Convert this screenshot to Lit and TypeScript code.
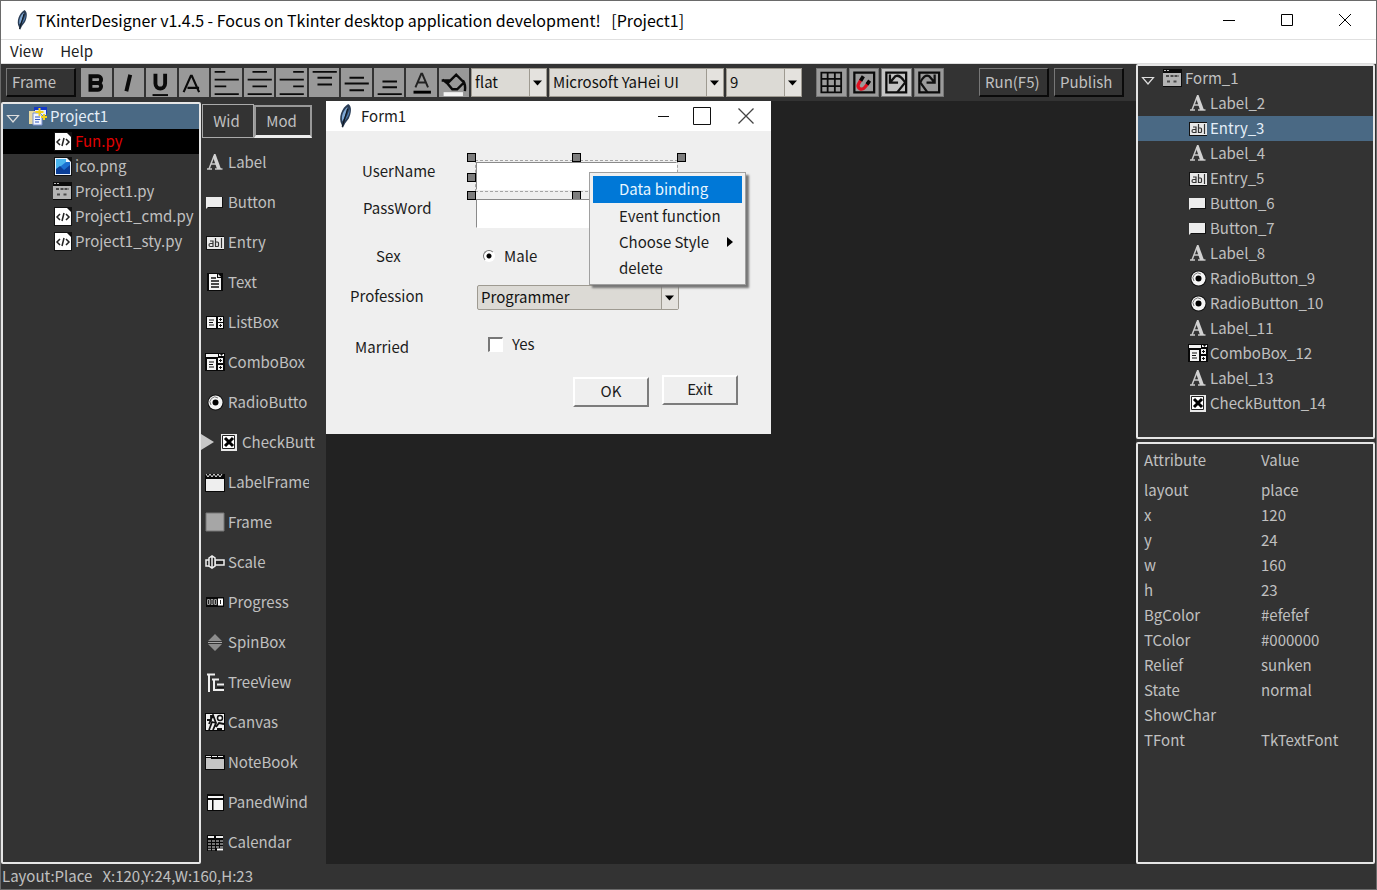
import { LitElement, html, svg, css, nothing } from "lit";
import { customElement, state } from "lit/decorators.js";
import { classMap } from "lit/directives/class-map.js";
import { styleMap } from "lit/directives/style-map.js";

const glyphs: Record<string, unknown> = {
  feather: svg`<path d="M13.500 0C17 2 16 8 14 12l-3 4-2 4-1-3C5 12 8 3 13.500 0z" fill="#2a3d56"/><path d="M13 2.500C9.500 5 7.500 10 8.500 14.500c2-3 3.500-7 4.500-12z" fill="#7fa8d4"/><path d="M14.500 4c.500 4-1 7-4 10 1.500-3 3-6 4-10z" fill="#4f7db0"/><path d="M13 4 8.500 19" stroke="#101820" stroke-width="1"/>`,
  project: svg`<path d="M6 1h13v7H6z" fill="#1438c8"/><path d="M7 4h11v5H7z" fill="#e8eefc"/><path d="M1 5h7v13H1z" fill="#e8d9a0"/><path d="M5 7h7l2 2v10H5z" fill="#f2f6ff" stroke="#7890d0"/><path d="M7 11h5M7 13.500h5M7 16h4" stroke="#3558c0"/><path d="M11.500 2v8M7.500 6h8M16 8v6M13 11h6" stroke="#f3d21c" stroke-width="2"/>`,
  code: svg`<path d="M1 1h18v19H1z" fill="#111"/><path d="M2 2h12l4 4v13H2z" fill="#fff"/><path d="m7 8-3 3 3 3M13 8l3 3-3 3M11 7l-2 8" fill="none" stroke="#222" stroke-width="1.500"/>`,
  image: svg`<path d="M1 1h18v19H1z" fill="#111"/><path d="M2 2h12l4 4v13H2z" fill="#eaf4ff"/><path d="M3 3h10v3h4v12H3z" fill="#1b6fd0"/><path d="M3 3h10v3L3 14z" fill="#48b4ee"/><path d="m3 13 4-3 4 4 6-5v9H3z" fill="#0a3e98"/>`,
  form: svg`<path d="M0 1h19v18H0z" fill="#0b0b0b"/><path d="M1 2h2v1H1zM4 2h2v1H4z" fill="#bbb"/><path d="M0 5h18v13H0z" fill="#b4b4b4"/><path d="M3 8h3M7.500 8H16M4 13.500h4M10.500 13.500h4" stroke="#4a4a4a" stroke-width="2" stroke-dasharray="3 1"/>`,
  label: svg`<path d="M2 17h5M10 17h7.500" stroke="#c8c8c8" stroke-width="1.500"/><path d="m4 17 5-13M6 12h7" stroke="#c8c8c8" stroke-width="1.500" fill="none"/><path d="m8 5 1-3h1.500l5.500 15h-4z" fill="#d2d2d2"/>`,
  button: svg`<path d="M1 5h17v11H1z" fill="#111"/><path d="M1 5h16v10H3l-2 2z" fill="#ececec"/>`,
  entry: svg`<path d="M1 4h18v14H1z" fill="#111"/><path d="M2 5h17v12H2z" fill="#e8e8e8"/><path d="M5 9h3v5.500H5.500a1 1 0 0 1 0-3H8M10.500 6v8.500h2a1 1 0 0 0 1-1V11a1 1 0 0 0-1-1h-2M16.500 6v10" fill="none" stroke="#333" stroke-width="1.200"/>`,
  text: svg`<path d="M2 1h16v18H2z" fill="#090909"/><path d="M4 2h8v4h4v12H4z" fill="#f4f4f4"/><path d="m13 2 3 3h-3z" fill="#ddd"/><path d="M6 6h5M6 9h8M6 12h8M6 15h8" stroke="#111" stroke-width="1.500"/>`,
  listbox: svg`<path d="M1 4h18v13H1z" fill="#080808"/><path d="M2 5h9v11H2zM13 5h5v5h-5zM13 11h5v5h-5z" fill="#f4f4f4"/><path d="M4 8h5M4 10.500h4M4 13h5M14 7.500h3M14 13.500h3M15.500 6v3M15.500 12v3" stroke="#111"/>`,
  combobox: svg`<path d="M0 1h20v18H0z" fill="#080808"/><path d="M1 2h12v3H1zM14 2h5v2h-5zM2 7h9v11H2zM13 6h5v5h-5zM13 13h5v5h-5z" fill="#f4f4f4"/><path d="M4 10h5M4 12.500h4M4 15h5M14 8.500h3M14 15.500h3M15.500 7v3M15.500 14v3" stroke="#111"/><path d="M15 2h3l-1.500 2z" fill="#111"/>`,
  radio: svg`<circle cx="10.500" cy="10.500" r="8" fill="#111"/><circle cx="10.500" cy="10.500" r="7" fill="#f4f4f4"/><path d="M6 13a5 5 0 0 1 7-7" fill="none" stroke="#777"/><circle cx="10.500" cy="10.500" r="3" fill="#000"/>`,
  check: svg`<path d="M2 2h16v17H2z" fill="#e9e9e9"/><path d="M3.500 3.500h12v13h-12z" fill="#fff" stroke="#222"/><path d="m6 6 8 8M14 6l-8 8" stroke="#000" stroke-width="3"/>`,
  labelframe: svg`<path d="M0 2h20v18H0z" fill="#080808"/><path d="M1 7h18v12H1z" fill="#eee"/><path d="m1 2 2 3 2-3 2 3 2-3 2 3 2-3 2 3 2-3" stroke="#ddd" fill="none"/>`,
  frame: svg`<path d="M1 1h18v18H1z" fill="#a6a6a6" stroke="#777"/>`,
  scale: svg`<path d="M1 8h4v6H1zM10 8h9v5h-9z" fill="#222" stroke="#eee" stroke-width="1.500"/><path d="M4 6l3-2 3 2v8l-3 2-3-2zM7 5v11" fill="#222" stroke="#eee" stroke-width="1.500"/>`,
  progress: svg`<path d="M1 5h18v10H1z" fill="#080808"/><path d="M2.500 7.500h2v5h-2zM6 7.500h2v5H6zM9.500 7.500h2v5h-2z" fill="#222" stroke="#999"/><path d="M13 6.500h5v7h-5z" fill="#fff"/><path d="M15.500 8v4" stroke="#222"/>`,
  spin: svg`<path d="m10 2 7 7H3zM3 12h14l-7 7z" fill="#8c8c8c"/><path d="M3 10.500h14" stroke="#aaa"/>`,
  tree: svg`<path d="M2 2.500h8M4 2v18M7 7.500h7M9 7v12M12 12.500h7M8 18h11" stroke="#eee" stroke-width="2"/><path d="M12 15.500h7" stroke="#111"/>`,
  canvas: svg`<path d="M0 1h20v18H0z" fill="#080808"/><path d="M1 2h18v16H1z" fill="#efefef"/><path d="M2 8h4V3M4 12l4-9 3 8M4 18l3-8 4 1-3 7M11 15l3-4 5 1M12 17h5" stroke="#111" stroke-width="1.800" fill="none"/><circle cx="15" cy="6" r="2.500" fill="#fff" stroke="#111" stroke-width="1.500"/>`,
  notebook: svg`<path d="M0 3h20v15H0z" fill="#080808"/><path d="M1 4h5v1H1zM7 4h5v1H7zM13 4h5v1h-5z" fill="#eee"/><path d="M1 6h5v1h13v10H1z" fill="#c4c4c4"/>`,
  paned: svg`<path d="M2 2h17v17H2z" fill="#080808"/><path d="M3 4h15v2H3zM3 8h4v10H3zM8.500 8H18v10H8.500z" fill="#f6f6f6"/>`,
  calendar: svg`<path d="M2 3h16v16H2z" fill="#080808"/><path d="M3 5h6M11 5h7" stroke="#eee" stroke-width="2"/><path d="M3 9h15M3 12h15M3 15h15M3 17.500h8" stroke="#999" stroke-width="1.500" stroke-dasharray="3 1"/><path d="M12 17.500h6" stroke="#fff" stroke-width="2"/>`,
};

const icon = (name: string) =>
  html`<svg class="icon" viewBox="0 0 20 20" aria-hidden="true">${glyphs[name]}</svg>`;

/* Toolbar faces are drawn on a 30 x 30 grid. */
const bars = (d: string) => svg`<path d=${d} stroke="#0a0a0a" stroke-width="2"/>`;
const formatTools: [string, unknown][] = [
  ["Bold", svg`<path d="M9 8.500v14h7a3.500 3.500 0 0 0 1-7 3.500 3.500 0 0 0-1-7zM9 15.500h8" fill="none" stroke="#0a0a0a" stroke-width="4"/>`],
  ["Italic", svg`<path d="m16 7-4 17" stroke="#0a0a0a" stroke-width="4"/>`],
  ["Underline", svg`<path d="M9 6v10c0 7 10 7 10 0V6" fill="none" stroke="#0a0a0a" stroke-width="4"/><path d="M6 28h16" stroke="#0a0a0a" stroke-width="2"/>`],
  ["Strikethrough", svg`<path d="m4 25 7.500-17h1L20 25M8 20.500h12" fill="none" stroke="#0a0a0a" stroke-width="2.200"/>`],
  ["Align left", bars("M3 4h11M3 12h25M3 19h12M3 27h25")],
  ["Align center", bars("M8 4h15M3 12h25M8 19h15M3 27h25")],
  ["Align right", bars("M17 4h11M3 12h25M17 19h11M3 27h25")],
  ["Align top", bars("M3 4h25M8 10h15M8 17h15")],
  ["Align middle", bars("M8 10h15M3 16h25M8 23h15")],
  ["Align bottom", bars("M8 14h15M8 20h15M3 27h25")],
  ["Text color", svg`<path d="m9 20 6-14h1l6 14M11 15h9" fill="none" stroke="#222" stroke-width="2"/><path d="M7 25h18" stroke="#000" stroke-width="3"/>`],
  ["Fill color", svg`<path d="M2 13h9M8 16l9-9 8 8-7 7h-5zM3 12l6 5M24 13q3 4 2 11" fill="none" stroke="#0a0a0a" stroke-width="2.500"/><path d="M4 25h20v4H4z" fill="#f4f4f4"/>`],
];

const gridTools: [string, unknown][] = [
  ["Grid", svg`<path d="M4 4h22v22H4zM11 4v22M19 4v22M4 11h22M4 19h22" fill="none" stroke="#0a0a0a" stroke-width="2"/>`],
  ["Snap", svg`<path d="M4 4h22v22H4z" fill="none" stroke="#0a0a0a" stroke-width="2.500"/><path d="M12 11 9 16c-3 5 3 9 7 4l4-5" fill="none" stroke="#e01020" stroke-width="3.500"/><path d="m14 8-3 5M21 13l-3 4" stroke="#080808" stroke-width="4"/>`],
  ["Undo", svg`<path d="M4 4h22v22H4z" fill="none" stroke="#0a0a0a" stroke-width="2.500"/><path d="M8 6v9h9M8 15l6-7c4-2 7 1 11 7L16 26" fill="none" stroke="#111" stroke-width="2.500"/>`],
  ["Redo", svg`<path d="M4 4h22v22H4z" fill="none" stroke="#0a0a0a" stroke-width="2.500"/><path d="M21 6v9h-9M21 15l-6-7c-4-2-7 1-10 7l8 11" fill="none" stroke="#111" stroke-width="2.500"/>`],
];

const files = [
  ["code", "Fun.py"], ["image", "ico.png"], ["form", "Project1.py"],
  ["code", "Project1_cmd.py"], ["code", "Project1_sty.py"],
];

const widgets = [
  ["label", "Label"], ["button", "Button"], ["entry", "Entry"], ["text", "Text"],
  ["listbox", "ListBox"], ["combobox", "ComboBox"], ["radio", "RadioButto"],
  ["check", "CheckButt"], ["labelframe", "LabelFrame"], ["frame", "Frame"],
  ["scale", "Scale"], ["progress", "Progress"], ["spin", "SpinBox"],
  ["tree", "TreeView"], ["canvas", "Canvas"], ["notebook", "NoteBook"],
  ["paned", "PanedWind"], ["calendar", "Calendar"],
];

const elements = [
  ["label", "Label_2"], ["entry", "Entry_3"], ["label", "Label_4"], ["entry", "Entry_5"],
  ["button", "Button_6"], ["button", "Button_7"], ["label", "Label_8"],
  ["radio", "RadioButton_9"], ["radio", "RadioButton_10"], ["label", "Label_11"],
  ["combobox", "ComboBox_12"], ["label", "Label_13"], ["check", "CheckButton_14"],
];

const attributes = [
  ["layout", "place"], ["x", "120"], ["y", "24"], ["w", "160"], ["h", "23"],
  ["BgColor", "#efefef"], ["TColor", "#000000"], ["Relief", "sunken"],
  ["State", "normal"], ["ShowChar", ""], ["TFont", "TkTextFont"],
];

const place = (x: number, y: number, w?: number, h?: number) =>
  styleMap({
    left: `${x}px`,
    top: `${y}px`,
    ...(w ? { width: `${w}px` } : {}),
    ...(h ? { height: `${h}px` } : {}),
  });

const shared = css`
  * { box-sizing: border-box; }
  button, select, input { font: inherit; color: inherit; margin: 0; }
  button { border: 0; padding: 0; background: none; text-align: left; }
  ul { list-style: none; margin: 0; padding: 0; }
  .icon { width: 20px; height: 20px; flex: none; display: block; }
  .combo { display: grid; grid-template-columns: 1fr 17px; border: 1px solid #9e9a91; background: #dcdad5; color: #111; }
  .combo select { grid-area: 1 / 1 / 2 / 3; appearance: none; border: 0; border-radius: 0; background: none; padding: 0 18px 2px 3px; width: 100%; min-width: 0; }
  .combo svg { grid-area: 1 / 2; width: 17px; height: 100%; border-left: 1px solid #9e9a91; background: #e4e2de; pointer-events: none; }
`;

const comboArrow = html`<svg viewBox="0 0 16 16" aria-hidden="true"><path d="M3 6h9l-4.500 5z" fill="#000"/></svg>`;

@customElement("form-designer")
class FormDesigner extends LitElement {
  static styles = [
    shared,
    css`
      :host { display: block; position: relative; width: 445px; background: #efefef; color: #1c1c1c; }
      .title { display: flex; align-items: center; height: 30px; background: #fff; padding-left: 6px; }
      .title .name { flex: 1; padding-left: 5px; }
      .title .icon { width: 24px; height: 24px; }
      .title button svg { display: block; margin: auto; }
      .min, .max { width: 38px; }
      .close { width: 50px; }
      .body { position: relative; height: 303px; }
      .placed { position: absolute; line-height: 20px; white-space: nowrap; }
      .field { background: #fff; border: 1px solid; border-color: #8a8a8a #fff #fff #8a8a8a; border-radius: 0; padding: 0 3px; }
      .outline { border: 1px dashed #a4a4a4; }
      .handle { width: 9px; height: 9px; background: #7d7d7d; border: 1px solid #000; }
      .option { display: flex; align-items: center; gap: 9px; }
      .option input { appearance: none; border: 1px solid; background: #fff; }
      .option .dot { width: 12px; height: 12px; border-radius: 50%; border-color: #777 #fff #fff #777; background: radial-gradient(circle, #000 2px, #fff 3px); }
      .option .tick { width: 15px; height: 15px; border-width: 2px 1px 1px 2px; border-color: #777 #fff #fff #777; }
      .push { background: #efefef; border: 2px solid; border-color: #fff #7c7c7c #7c7c7c #fff; padding-bottom: 2px; text-align: center; }
      .combo { border-radius: 2px; }
      .menu { position: absolute; left: 263px; top: 71px; width: 157px; padding: 3px; background: #f0f0f0; border: 1px solid #a0a0a0; box-shadow: 3px 3px 2px #777; }
      .menu button { display: flex; align-items: center; justify-content: space-between; width: 100%; height: 27px; padding: 0 9px 1px 26px; }
      .menu li:nth-child(n + 2) button { height: 26px; }
      .menu .active { background: #0078d7; color: #e8f6ff; }
      .menu svg { width: 6px; height: 10px; }
    `,
  ];

  @state() active = "Data binding";

  render() {
    const menu = ["Data binding", "Event function", "Choose Style", "delete"];
    return html`
      <header class="title">
        ${icon("feather")}<span class="name">Form1</span>
        <button class="min" aria-label="Minimize form"><svg width="12" height="12"><path d="M0 6.500h11" stroke="#111"/></svg></button>
        <button class="max" aria-label="Maximize form"><svg width="20" height="20"><path d="M1.500 1.500h17v17h-17z" fill="none" stroke="#111"/></svg></button>
        <button class="close" aria-label="Close form"><svg width="18" height="18"><path d="m1.500 1.500 15 15M16.500 1.500l-15 15" stroke="#444" stroke-width="1.300"/></svg></button>
      </header>
      <div class="body">
        <label class="placed" for="user" style=${place(36, 30)}>UserName</label>
        <label class="placed" for="pass" style=${place(37, 67)}>PassWord</label>
        <span class="placed" id="sex" style=${place(50, 115)}>Sex</span>
        <label class="placed" for="job" style=${place(24, 155)}>Profession</label>
        <span class="placed" id="married" style=${place(29, 206)}>Married</span>

        <div class="placed outline" style=${place(149, 29, 203, 32)}></div>
        <input class="placed field" id="user" style=${place(150, 31, 201, 28)} />
        ${[[141, 22], [246, 22], [351, 22], [141, 42], [351, 42], [141, 60], [246, 60], [351, 60]].map(
          ([x, y]) => html`<i class="placed handle" style=${place(x, y)}></i>`,
        )}
        <input class="placed field" id="pass" type="password" style=${place(150, 68, 201, 29)} />

        <label class="placed option" style=${place(157, 115)}><input class="dot" type="radio" name="sex" checked aria-describedby="sex" />Male</label>
        <div class="placed combo" style=${place(151, 154, 202, 25)}>
          <select id="job"><option>Programmer</option></select>${comboArrow}
        </div>
        <label class="placed option" style=${place(162, 203)}><input class="tick" type="checkbox" aria-describedby="married" />Yes</label>
        <button class="placed push" style=${place(247, 246, 76, 30)}>OK</button>
        <button class="placed push" style=${place(336, 244, 76, 30)}>Exit</button>
      </div>
      <ul class="menu">
        ${menu.map(
          (item) => html`<li><button class=${classMap({ active: item === this.active })} @mouseenter=${() => (this.active = item)}>
            ${item}${item === "Choose Style" ? html`<svg viewBox="0 0 6 10"><path d="M0 0l6 5-6 5z" fill="#000"/></svg>` : nothing}
          </button></li>`,
        )}
      </ul>
    `;
  }
}

@customElement("app-root")
class AppRoot extends LitElement {
  static styles = [
    shared,
    css`
      :host { display: flex; flex-direction: column; height: 100vh; min-height: 888px; box-sizing: border-box; border: 1px solid #6a6a6a; background: #333; color: #c0c0c0; font: 15px/20px "Noto Sans CJK SC", "Noto Sans", sans-serif; overflow: hidden; }
      .titlebar { display: flex; align-items: center; height: 39px; flex: none; padding: 0 2px 0 10px; background: #fff; color: #000; border-bottom: 1px solid #e0e0e0; }
      .titlebar h1 { flex: 1; margin: 0; padding: 0 0 1px 5px; font-size: 16px; font-weight: 400; white-space: pre; }
      .titlebar button { width: 58px; height: 38px; }
      .titlebar button svg { display: block; margin: auto; }
      .menubar { display: flex; gap: 17px; height: 24px; flex: none; padding: 0 9px 2px; background: #fff; color: #222; border-bottom: 1px solid #ddd; }
      .workspace { flex: 1; min-height: 0; display: grid; grid-template-columns: minmax(0, 1fr) 240px; }
      .main { display: flex; flex-direction: column; min-width: 0; min-height: 0; }
      .toolbar { display: flex; height: 37px; flex: none; padding: 4px 12px 4px 5px; }
      .raised { border: 1px solid; border-color: #777 #0a0a0a #0a0a0a #777; border-bottom-width: 2px; border-right-width: 2px; width: 70px; padding-left: 5px; }
      .tools { display: grid; grid-auto-flow: column; grid-auto-columns: 1fr; gap: 2px; }
      .tools button { background: #999; display: block; }
      .tools svg { display: block; width: 100%; height: 29px; }
      .format { width: 388px; margin: 0 2px 0 5px; }
      .grid { width: 128px; margin-left: 14px; }
      .grid button { background: #9b9b9b; border: 1px solid #777; }
      .grid button:nth-child(3) { background: #c4c4c4; }
      .grid svg { height: 27px; }
      .picks { display: flex; gap: 2px; }
      .narrow { width: 76px; }
      .wide { width: 175px; }
      .run { display: flex; gap: 5px; margin-left: auto; }
      .columns { flex: 1; min-height: 0; display: grid; grid-template-columns: 200px 125px minmax(0, 1fr); }
      .panel { border: 2px solid #e6e6e6; border-radius: 2px; min-height: 0; overflow: hidden; }
      .files { margin-top: 1px; }
      .row { display: flex; align-items: center; gap: 2px; width: 100%; height: 25px; padding: 0 0 2px 50px; }
      .row.root { padding-left: 3px; }
      .row.root .icon { margin-left: 6px; }
      .row.chosen { background: #4a6984; color: #e4eef8; }
      .row.broken { background: #000; color: #e00000; }
      .twist { width: 14px; height: 10px; margin-top: 7px; }
      .palette { min-height: 0; overflow: hidden; }
      .tabs { display: flex; align-items: flex-end; height: 37px; padding: 2px 0 0 1px; }
      .tabs button { text-align: center; border: 1px solid #aaa; height: 34px; width: 52px; padding-right: 3px; }
      .tabs button[aria-selected="false"] { width: 58px; height: 33px; border-width: 2px 2px 3px; border-color: #999 #999 #eee; }
      .widget { display: flex; align-items: center; gap: 3px; width: 108px; height: 40px; padding-left: 4px; overflow: hidden; white-space: nowrap; }
      .widgets { padding-top: 4px; }
      .widget.marked { width: 114px; padding-left: 0; }
      .marker { width: 13px; height: 16px; margin-right: 2px; flex: none; }
      .canvas { background: #222; min-width: 0; overflow: hidden; }
      .side { display: flex; flex-direction: column; gap: 3px; min-height: 0; padding-right: 1px; }
      .objects { flex: none; height: 375px; }
      .props { flex: 1; }
      table { border-collapse: collapse; width: 100%; table-layout: fixed; }
      th, td { font-weight: 400; text-align: left; height: 25px; padding: 0 0 2px 6px; }
      th { height: 34px; }
      th:first-child { width: 117px; }
      .status { display: flex; gap: 10px; height: 25px; flex: none; align-items: center; padding: 0 0 2px 1px; }
    `,
  ];

  @state() selected = "Entry_3";
  @state() tab = "Wid";

  private twist = html`<svg class="twist" viewBox="0 0 14 10" aria-hidden="true"><path d="M1.500 1.500h11L7 8z" fill="none" stroke="#ddd" stroke-width="1.200"/></svg>`;

  private combo(label: string, value: string, size: string) {
    return html`<div class="combo ${size}"><select aria-label=${label}><option>${value}</option></select>${comboArrow}</div>`;
  }

  private tools(list: [string, unknown][], kind: string) {
    return html`<div class="tools ${kind}">
      ${list.map(([name, face]) => html`<button aria-label=${name}><svg viewBox="0 0 30 30">${face}</svg></button>`)}
    </div>`;
  }

  render() {
    return html`
      <header class="titlebar">
        ${icon("feather")}
        <h1>TKinterDesigner v1.4.5 - Focus on Tkinter desktop application development!   [Project1]</h1>
        <button aria-label="Minimize"><svg width="12" height="12"><path d="M0 6.500h12" stroke="#000"/></svg></button>
        <button aria-label="Maximize"><svg width="12" height="12"><path d="M.5.500h11v11H.5z" fill="none" stroke="#000"/></svg></button>
        <button aria-label="Close"><svg width="12" height="12"><path d="m0 0 12 12M12 0 0 12" stroke="#000"/></svg></button>
      </header>
      <nav class="menubar"><button>View</button><button>Help</button></nav>
      <div class="workspace">
        <section class="main">
          <div class="toolbar">
            <button class="raised">Frame</button>
            ${this.tools(formatTools, "format")}
            <div class="picks">
              ${this.combo("Relief", "flat", "narrow")}
              ${this.combo("Font family", "Microsoft YaHei UI", "wide")}
              ${this.combo("Font size", "9", "narrow")}
            </div>
            ${this.tools(gridTools, "grid")}
            <div class="run"><button class="raised">Run(F5)</button><button class="raised">Publish</button></div>
          </div>
          <div class="columns">
            <ul class="panel files">
              <li><button class="row root chosen">${this.twist}${icon("project")}Project1</button></li>
              ${files.map(([kind, name]) => html`<li><button class=${classMap({ row: true, broken: name === "Fun.py" })}>${icon(kind)}${name}</button></li>`)}
            </ul>
            <div class="palette">
              <div class="tabs" role="tablist">
                ${["Wid", "Mod"].map((t) => html`<button role="tab" aria-selected=${t === this.tab ? "true" : "false"} @click=${() => (this.tab = t)}>${t}</button>`)}
              </div>
              <ul class="widgets">
                ${widgets.map(([kind, name]) => {
                  const marked = kind === "check";
                  return html`<li><button class=${classMap({ widget: true, marked })}>
                    ${marked ? html`<svg class="marker" viewBox="0 0 13 16"><path d="M0 0l13 8-13 8z" fill="#c8c8c8"/></svg>` : nothing}${icon(kind)}<span>${name}</span>
                  </button></li>`;
                })}
              </ul>
            </div>
            <div class="canvas"><form-designer></form-designer></div>
          </div>
        </section>
        <aside class="side">
          <ul class="panel objects">
            <li><button class="row root">${this.twist}${icon("form")}Form_1</button></li>
            ${elements.map(([kind, name]) => html`<li><button class=${classMap({ row: true, chosen: name === this.selected })} @click=${() => (this.selected = name)}>${icon(kind)}${name}</button></li>`)}
          </ul>
          <div class="panel props">
            <table>
              <thead><tr><th>Attribute</th><th>Value</th></tr></thead>
              <tbody>${attributes.map(([k, v]) => html`<tr><td>${k}</td><td>${v}</td></tr>`)}</tbody>
            </table>
          </div>
        </aside>
      </div>
      <footer class="status"><span>Layout:Place</span><span>X:120,Y:24,W:160,H:23</span></footer>
    `;
  }
}
